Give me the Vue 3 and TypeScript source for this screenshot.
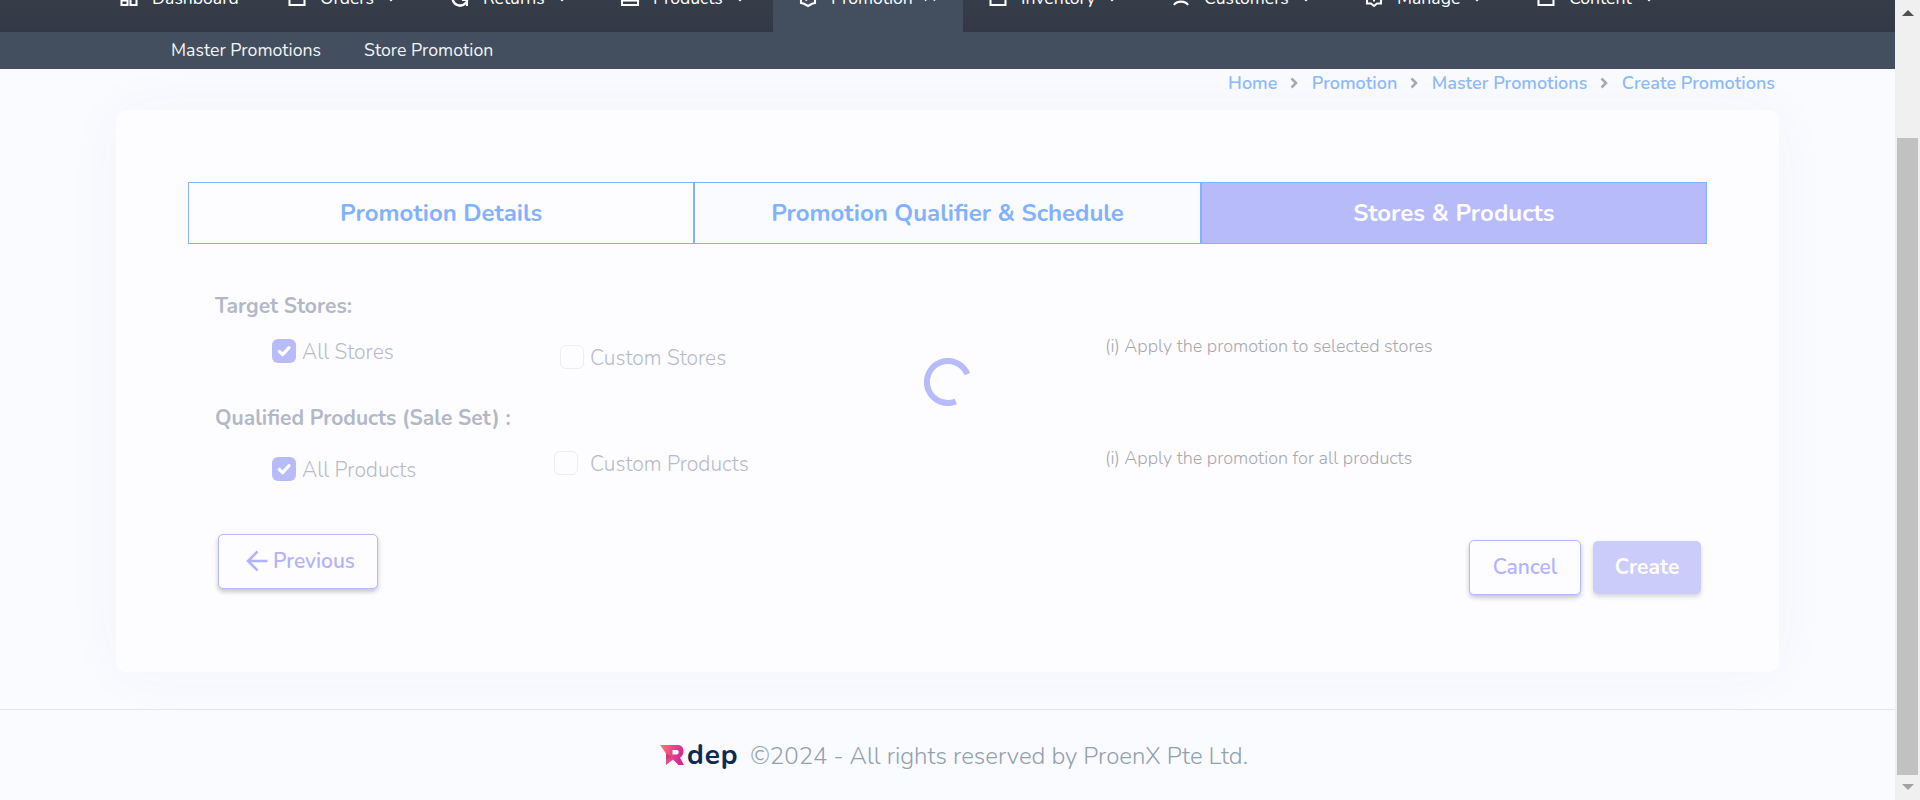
<script setup lang="ts">
interface NavItem {
  label: string
  icon: string[]
  chevron: 'none' | 'down' | 'up'
}

const navItems: NavItem[] = [
  { label: 'Dashboard', icon: ['M4.5 4.5h6v6h-6z', 'M13.5 4.5h6v4h-6z', 'M4.5 14.5h6v4.5h-6z', 'M13.5 12.5h6v6.500h-6z'], chevron: 'none' },
  { label: 'Orders', icon: ['M4.500 5h15v14h-15z'], chevron: 'down' },
  { label: 'Returns', icon: ['M19.500 12a7.500 7.500 0 1 1-2-5', 'M4.800 13.500a7.500 7.500 0 0 0 13 3.500', 'M19 20v-6h-5'], chevron: 'down' },
  { label: 'Products', icon: ['M4 5h16v14H4z', 'M4 14.500h16'], chevron: 'down' },
  { label: 'Promotion', icon: ['M12 3.500l7 3.500v10l-3 .8-4 2.200-4-2.200-3-.8V7z', 'M9.500 14.500l5-5'], chevron: 'up' },
  { label: 'Inventory', icon: ['M4.500 5h15v14h-15z'], chevron: 'down' },
  { label: 'Customers', icon: ['M12 4a4 4 0 1 1 0 8 4 4 0 0 1 0-8z', 'M5 19c2.500-4.500 11.500-4.500 14 0'], chevron: 'down' },
  { label: 'Manage', icon: ['M5 4h14v13.500h-4l-3 2.500-3-2.500H5z', 'M12 11.500v4'], chevron: 'down' },
  { label: 'Content', icon: ['M4.500 5h15v14h-15z'], chevron: 'down' },
]

const subItems: string[] = ['Master Promotions', 'Store Promotion']
const crumbs: string[] = ['Home', 'Promotion', 'Master Promotions', 'Create Promotions']
const steps: string[] = ['Promotion Details', 'Promotion Qualifier & Schedule', 'Stores & Products']
const activeStep = 2
</script>

<template>
  <div class="window">
    <div class="page">
      <header class="topbar">
        <nav class="nav">
          <a v-for="item in navItems" :key="item.label" class="nav-item" :class="{ active: item.chevron === 'up' }">
            <svg class="nav-icon" viewBox="0 0 24 24"><path v-for="d in item.icon" :key="d" :d="d" /></svg>
            <span>{{ item.label }}</span>
            <svg v-if="item.chevron !== 'none'" class="nav-chevron" viewBox="0 0 16 16">
              <path :d="item.chevron === 'up' ? 'M3 10.500l5-5 5 5' : 'M3.500 5.800L8 10.300l4.500-4.500'" />
            </svg>
          </a>
        </nav>
      </header>
      <nav class="subnav">
        <a v-for="s in subItems" :key="s">{{ s }}</a>
      </nav>

      <div class="crumbs">
        <template v-for="(c, i) in crumbs" :key="c">
          <svg v-if="i > 0" viewBox="0 0 8 12"><path d="M1.500 1.500L6 6l-4.500 4.500" /></svg>
          <a>{{ c }}</a>
        </template>
      </div>

      <main class="card">
        <div class="steps">
          <div v-for="(s, i) in steps" :key="s" class="step" :class="{ current: i === activeStep, middle: i === 1 }">{{ s }}</div>
        </div>

        <section class="form">
          <h2>Target Stores:</h2>
          <div class="options first">
            <label class="option low1">
              <span class="box checked"><svg viewBox="0 0 24 24"><path d="M7.300 12.500l3.300 3.200 6.400-7" /></svg></span>All Stores
            </label>
            <label class="option low2 inset"><span class="box"></span>Custom Stores</label>
            <p>(i) Apply the promotion to selected stores</p>
          </div>
          <h2>Qualified Products (Sale Set) :</h2>
          <div class="options">
            <label class="option low2">
              <span class="box checked"><svg viewBox="0 0 24 24"><path d="M7.300 12.500l3.300 3.200 6.400-7" /></svg></span>All Products
            </label>
            <label class="option low1 wide"><span class="box"></span>Custom Products</label>
            <p>(i) Apply the promotion for all products</p>
          </div>
        </section>

        <div class="actions">
          <button class="btn outline previous">
            <svg viewBox="0 0 22 22"><path d="M21.500 11H2M11.500 1.500L2 11l9.500 9.500" /></svg>Previous
          </button>
          <div class="right">
            <button class="btn outline cancel">Cancel</button>
            <button class="btn create">Create</button>
          </div>
        </div>

        <svg class="spinner" viewBox="0 0 48 48"><path d="M43.400 16.200A21 21 0 1 0 31.800 43.500" /></svg>
      </main>

      <footer class="footer">
        <svg class="mark" viewBox="0 0 24 20">
          <defs>
            <linearGradient id="mark" x1="0" y1="0" x2="1" y2="0.300">
              <stop offset="0" stop-color="#fb7a6c" />
              <stop offset="0.500" stop-color="#ea4c86" />
              <stop offset="1" stop-color="#cf2a98" />
            </linearGradient>
          </defs>
          <path fill="url(#mark)" fill-rule="evenodd" d="M0 0H17.500C21.500 0 23.500 2.500 23.500 6.500C23.500 9.500 22 11.500 20 12.800L24 20H18.500L13 14.500L6 20V8.500ZM12.500 5V9.500H17C19 9.500 19.500 5 17 5Z" />
          <path fill="#b8307a" opacity="0.600" d="M6 8.500l5.500 3L6 15z" />
        </svg>
        <span class="brand">dep</span>
        <span class="copy">©2024 - All rights reserved by ProenX Pte Ltd.</span>
      </footer>
    </div>

    <div class="scrollbar">
      <svg viewBox="0 0 12 6"><path fill="#505050" d="M6 0l6 6H0z" /></svg>
      <div class="thumb"></div>
      <svg viewBox="0 0 12 6"><path fill="#a3a3a3" d="M0 0h12L6 6z" /></svg>
    </div>
  </div>
</template>

<style>
body {
  margin: 0;
  overflow: hidden;
}
</style>

<style scoped>
* {
  box-sizing: border-box;
}
.window {
  display: flex;
  width: 1920px;
  height: 800px;
  overflow: hidden;
  font-family: Nunito, 'Open Sans', sans-serif;
}
.page {
  display: flex;
  flex-direction: column;
  width: 1895px;
  background: #fafbff;
}
svg {
  display: block;
  flex: none;
}
.topbar {
  display: flex;
  align-items: flex-end;
  flex: none;
  height: 32px;
  overflow: hidden;
  background: linear-gradient(#343d49, #343b47 55%, #333846);
  z-index: 1;
}
.nav {
  display: grid;
  grid-template-columns: 168px 163px 170px 178px 190px 183px 193px 172px 169px;
  flex: none;
  height: 69px;
  padding-left: 94px;
}
.nav-item {
  display: flex;
  align-items: center;
  padding: 0 0 0 23px;
  color: #fff;
  font-size: 17.600px;
}
.nav-item.active {
  background: #434e5e;
}
.nav-item span {
  margin-left: 11px;
}
.nav-icon {
  width: 24px;
  height: 24px;
  fill: none;
  stroke: #fff;
  stroke-width: 2.100;
}
.nav-chevron {
  width: 16px;
  height: 16px;
  margin: 1px 0 0 9px;
  fill: none;
  stroke: #fff;
  stroke-width: 1.800;
}
.subnav {
  display: flex;
  align-items: center;
  flex: none;
  gap: 43px;
  height: 37px;
  padding: 0 0 2px 171px;
  background: #434e5e;
  color: #f3f4f6;
  font-size: 17.700px;
  z-index: 1;
}
.crumbs {
  display: flex;
  align-items: center;
  justify-content: flex-end;
  flex: none;
  height: 41px;
  padding: 0 120px 13px 0;
  color: #8cb9ff;
  font-size: 18px;
  font-weight: 600;
  z-index: 1;
}
.crumbs svg {
  width: 8px;
  height: 12px;
  margin: 0 13.500px 0 13px;
  fill: none;
  stroke: #a6a9b0;
  stroke-width: 2.600;
}
.card {
  position: relative;
  flex: none;
  width: 1663px;
  height: 562px;
  margin-left: 116px;
  padding: 72px;
  border-radius: 10px;
  background: #fdfdff;
  box-shadow: 0 0 60px rgba(60, 80, 110, 0.040);
}
.steps {
  display: grid;
  grid-template-columns: repeat(3, 1fr);
  height: 62px;
}
.step {
  display: flex;
  align-items: center;
  justify-content: center;
  border: 1px solid #82b2ff;
  color: #82b2ff;
  font-size: 24px;
  font-weight: 700;
}
.step.middle {
  background: #fafbff;
}
.step.current {
  background: #b7bbfa;
  color: #fdfdff;
}
.form {
  padding: 47px 0 0 27px;
}
h2 {
  margin: 0;
  color: #b3b8c8;
  font-size: 21px;
  font-weight: 700;
  line-height: 30px;
}
.options {
  display: grid;
  grid-template-columns: 282px 551px auto;
  align-items: start;
  height: 69px;
  padding: 13px 0 0 57px;
}
.options.first {
  height: 82px;
}
.option {
  display: flex;
  align-items: center;
  gap: 6px;
  color: #b7bbc9;
  font-size: 21px;
  font-weight: 300;
  line-height: 30px;
}
.low1 {
  padding-top: 3px;
}
.low2 {
  padding-top: 9px;
}
.inset {
  padding-left: 6px;
}
.wide {
  gap: 12px;
}
.box {
  width: 24px;
  height: 24px;
  margin-top: -3px;
  border: 1px solid #ececf1;
  border-radius: 6px;
}
.box.checked {
  border: 0;
  background: #b7bbfa;
}
.box path {
  fill: none;
  stroke: #fff;
  stroke-width: 3.200;
  stroke-linecap: round;
  stroke-linejoin: round;
}
.options p {
  margin: 0;
  color: #a9a9ad;
  font-size: 18px;
  font-weight: 300;
  line-height: 24px;
}
.actions {
  display: flex;
  justify-content: space-between;
  padding: 32px 6px 0 30px;
}
.right {
  display: flex;
  align-items: center;
  gap: 12px;
  height: 55px;
  margin-top: 6px;
}
.btn {
  display: flex;
  align-items: center;
  justify-content: center;
  height: 55px;
  padding: 0 0 1px;
  border: 1px solid #b4b8fc;
  border-radius: 5px;
  background: #fdfdff;
  box-shadow: 0 3px 4px rgba(0, 0, 0, 0.190), 0 1px 10px rgba(0, 0, 0, 0.040);
  color: #b2b3fb;
  font-family: inherit;
  font-size: 21px;
  font-weight: 600;
}
.previous {
  width: 160px;
  padding-left: 5px;
}
.previous svg {
  width: 22px;
  height: 22px;
  margin-right: 5px;
  fill: none;
  stroke: #b2b3fb;
  stroke-width: 2.600;
}
.cancel {
  width: 112px;
}
.create {
  width: 108px;
  height: 53px;
  border: 0;
  background: #ccccfa;
  box-shadow: 0 3px 4px rgba(0, 0, 0, 0.120), 0 1px 8px rgba(0, 0, 0, 0.040);
  color: #fdfdff;
  font-weight: 700;
}
.spinner {
  position: absolute;
  left: 808px;
  top: 248px;
  width: 48px;
  height: 48px;
  fill: none;
  stroke: #b7bbfa;
  stroke-width: 6;
}
.footer {
  display: flex;
  align-items: center;
  justify-content: center;
  flex: none;
  height: 91px;
  margin-top: 37px;
  padding: 2px 0 0 13px;
  border-top: 1px solid #e6e7ec;
}
.mark {
  width: 24px;
  height: 20px;
  margin-top: -2px;
}
.brand {
  margin: -3px 12px 0 3px;
  color: #0c2a54;
  font-size: 28px;
  font-weight: 700;
  letter-spacing: 0.800px;
}
.copy {
  color: #93a0ae;
  font-size: 24px;
  font-weight: 300;
}
.scrollbar {
  display: flex;
  flex-direction: column;
  align-items: center;
  width: 25px;
  padding-top: 10px;
  background: #f0f0f0;
}
.scrollbar svg {
  width: 12px;
  height: 6px;
}
.thumb {
  width: 21px;
  height: 637px;
  margin: 122px 0 9px;
  background: #c1c1c1;
}
</style>
